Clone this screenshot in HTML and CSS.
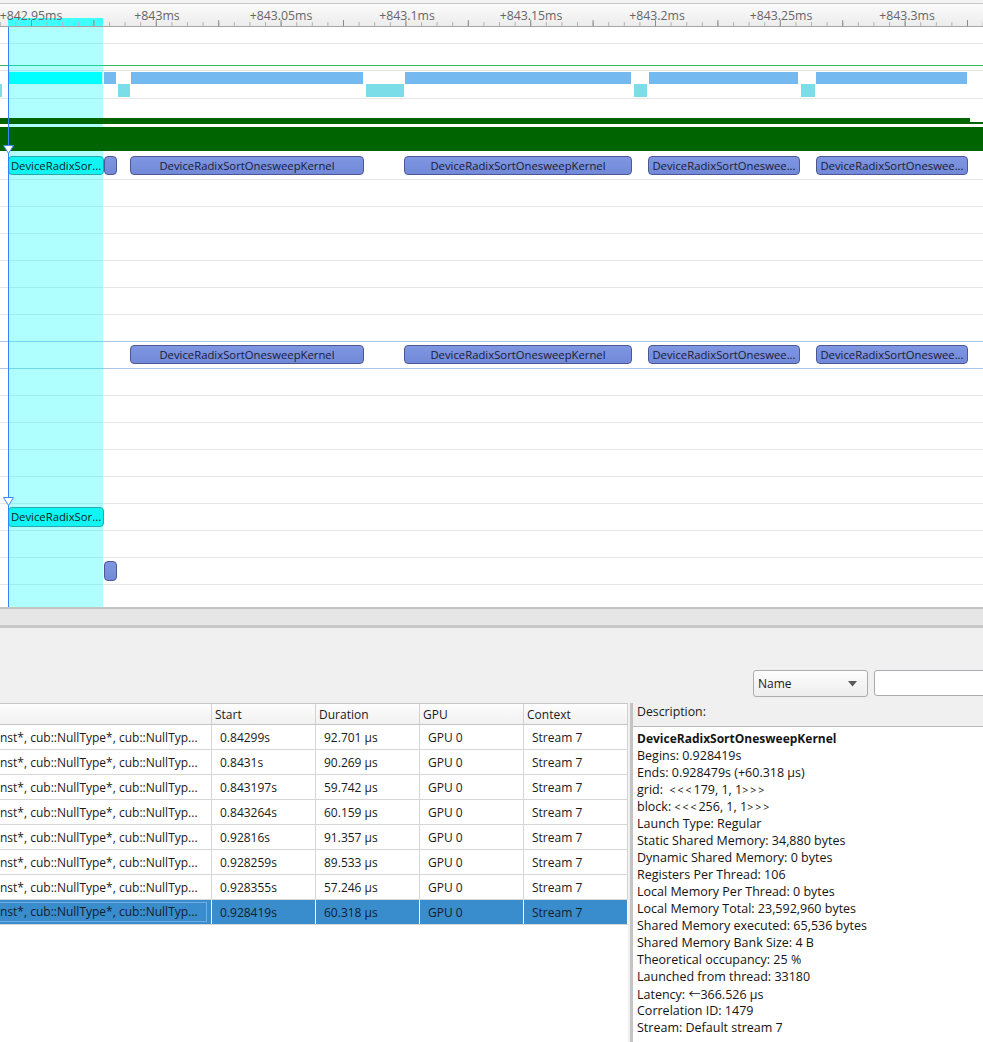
FILE: index.html
```html
<!DOCTYPE html>
<html>
<head>
<meta charset="utf-8">
<link rel="stylesheet" href="styles.css">
</head>
<body>
<div class="app">
  <div class="timeline">
    <div class="ruler-wrap">
      <div class="ruler">
        <svg class="ruler-svg" width="983" height="22" viewBox="0 0 983 22">
          <defs>
            <pattern id="minor" x="-0.2" y="0" width="15.6" height="22" patternUnits="userSpaceOnUse">
              <rect x="0" y="18" width="1" height="4" fill="#b4b4b4"/>
            </pattern>
            <pattern id="major" x="31" y="0" width="62.4" height="22" patternUnits="userSpaceOnUse">
              <rect x="0" y="16" width="1" height="6" fill="#8c8c8c"/>
            </pattern>
          </defs>
          <rect x="8" y="14" width="95" height="8" fill="#40ffff"/>
          <rect width="983" height="22" fill="url(#minor)"/>
          <rect width="983" height="22" fill="url(#major)"/>
          <g class="ruler-labels">
            <text x="31" y="15.5">+842.95ms</text>
            <text x="157" y="15.5">+843ms</text>
            <text x="281" y="15.5">+843.05ms</text>
            <text x="407" y="15.5">+843.1ms</text>
            <text x="531" y="15.5">+843.15ms</text>
            <text x="657" y="15.5">+843.2ms</text>
            <text x="781" y="15.5">+843.25ms</text>
            <text x="907" y="15.5">+843.3ms</text>
          </g>
        </svg>
      </div>
    </div>

    <div class="tracks">
      <div class="sel"></div>

      <div class="row r0"></div>
      <div class="row r1"></div>
      <div class="row r2"></div>
      <div class="row r3">
        <div class="tb cyan" style="left:9px;width:93px"></div>
        <div class="tb" style="left:104px;width:12px"></div>
        <div class="tb" style="left:131px;width:232px"></div>
        <div class="tb" style="left:405px;width:226px"></div>
        <div class="tb" style="left:649px;width:149px"></div>
        <div class="tb" style="left:816px;width:151px"></div>
        <div class="mb" style="left:0px;width:2px"></div>
        <div class="mb" style="left:118px;width:12px"></div>
        <div class="mb" style="left:366px;width:38px"></div>
        <div class="mb" style="left:634px;width:13px"></div>
        <div class="mb" style="left:801px;width:14px"></div>
      </div>
      <div class="row r4">
        <div class="gb gb1"></div>
        <div class="gb gb1b"></div>
        <div class="gb gb2"></div>
      </div>
      <div class="row r5">
        <div class="kb kb-sel" style="left:8px;width:96px">DeviceRadixSor...</div>
        <div class="kb" style="left:104px;width:13px"></div>
        <div class="kb" style="left:130px;width:234px">DeviceRadixSortOnesweepKernel</div>
        <div class="kb" style="left:404px;width:228px">DeviceRadixSortOnesweepKernel</div>
        <div class="kb" style="left:648px;width:152px">DeviceRadixSortOneswee...</div>
        <div class="kb" style="left:816px;width:152px">DeviceRadixSortOneswee...</div>
      </div>
      <div class="row"></div>
      <div class="row"></div>
      <div class="row"></div>
      <div class="row"></div>
      <div class="row"></div>
      <div class="row r-hl"></div>
      <div class="row r-hl r-k2">
        <div class="kb" style="left:130px;width:234px">DeviceRadixSortOnesweepKernel</div>
        <div class="kb" style="left:404px;width:228px">DeviceRadixSortOnesweepKernel</div>
        <div class="kb" style="left:648px;width:152px">DeviceRadixSortOneswee...</div>
        <div class="kb" style="left:816px;width:152px">DeviceRadixSortOneswee...</div>
      </div>
      <div class="row"></div>
      <div class="row"></div>
      <div class="row"></div>
      <div class="row"></div>
      <div class="row"></div>
      <div class="row r-k3">
        <div class="kb kb-sel" style="left:8px;width:96px">DeviceRadixSor...</div>
      </div>
      <div class="row"></div>
      <div class="row r-k3">
        <div class="kb" style="left:104px;width:13px"></div>
      </div>
      <div class="row r-last"></div>

      <div class="sel-line"></div>
      <svg class="marker m1" width="11" height="9" viewBox="0 0 11 9"><path d="M0.5 0.5 H10.5 L5.5 8.5 Z" fill="#ffffff" stroke="#3d8bff" stroke-width="1"/></svg>
      <svg class="marker m2" width="11" height="9" viewBox="0 0 11 9"><path d="M0.5 0.5 H10.5 L5.5 8.5 Z" fill="#ffffff" stroke="#3d8bff" stroke-width="1"/></svg>
    </div>
  </div>
  <div class="split"></div>

  <div class="panel">
    <div class="toolbar">
      <div class="dropdown">
        <span>Name</span>
        <svg class="dd-arrow" width="9" height="6" viewBox="0 0 9 6"><path d="M0 0 H9 L4.5 5.5 Z" fill="#5a5a5a"/></svg>
      </div>
      <div class="search"></div>
    </div>
    <div class="content">
      <div class="table">
        <div class="tr th">
          <div class="c c1"></div>
          <div class="c">Start</div>
          <div class="c">Duration</div>
          <div class="c">GPU</div>
          <div class="c">Context</div>
        </div>
        <div class="tr">
          <div class="c c1">nst*, cub::NullType*, cub::NullTyp...</div>
          <div class="c">0.84299s</div><div class="c">92.701 μs</div><div class="c">GPU 0</div><div class="c">Stream 7</div>
        </div>
        <div class="tr">
          <div class="c c1">nst*, cub::NullType*, cub::NullTyp...</div>
          <div class="c">0.8431s</div><div class="c">90.269 μs</div><div class="c">GPU 0</div><div class="c">Stream 7</div>
        </div>
        <div class="tr">
          <div class="c c1">nst*, cub::NullType*, cub::NullTyp...</div>
          <div class="c">0.843197s</div><div class="c">59.742 μs</div><div class="c">GPU 0</div><div class="c">Stream 7</div>
        </div>
        <div class="tr">
          <div class="c c1">nst*, cub::NullType*, cub::NullTyp...</div>
          <div class="c">0.843264s</div><div class="c">60.159 μs</div><div class="c">GPU 0</div><div class="c">Stream 7</div>
        </div>
        <div class="tr">
          <div class="c c1">nst*, cub::NullType*, cub::NullTyp...</div>
          <div class="c">0.92816s</div><div class="c">91.357 μs</div><div class="c">GPU 0</div><div class="c">Stream 7</div>
        </div>
        <div class="tr">
          <div class="c c1">nst*, cub::NullType*, cub::NullTyp...</div>
          <div class="c">0.928259s</div><div class="c">89.533 μs</div><div class="c">GPU 0</div><div class="c">Stream 7</div>
        </div>
        <div class="tr">
          <div class="c c1">nst*, cub::NullType*, cub::NullTyp...</div>
          <div class="c">0.928355s</div><div class="c">57.246 μs</div><div class="c">GPU 0</div><div class="c">Stream 7</div>
        </div>
        <div class="tr selected">
          <div class="c c1"><span class="focus">nst*, cub::NullType*, cub::NullTyp...</span></div>
          <div class="c">0.928419s</div><div class="c">60.318 μs</div><div class="c">GPU 0</div><div class="c">Stream 7</div>
        </div>
      </div>
      <div class="desc">
        <div class="desc-head">Description:</div>
        <div class="desc-body">
          <div class="line b">DeviceRadixSortOnesweepKernel</div>
          <div class="line">Begins: 0.928419s</div>
          <div class="line">Ends: 0.928479s (+60.318 μs)</div>
          <div class="line">grid:&nbsp; <span class="ang">&lt;&lt;&lt;</span>179, 1, 1<span class="ang">&gt;&gt;&gt;</span></div>
          <div class="line">block: <span class="ang">&lt;&lt;&lt;</span>256, 1, 1<span class="ang">&gt;&gt;&gt;</span></div>
          <div class="line">Launch Type: Regular</div>
          <div class="line">Static Shared Memory: 34,880 bytes</div>
          <div class="line">Dynamic Shared Memory: 0 bytes</div>
          <div class="line">Registers Per Thread: 106</div>
          <div class="line">Local Memory Per Thread: 0 bytes</div>
          <div class="line">Local Memory Total: 23,592,960 bytes</div>
          <div class="line">Shared Memory executed: 65,536 bytes</div>
          <div class="line">Shared Memory Bank Size: 4 B</div>
          <div class="line">Theoretical occupancy: 25 %</div>
          <div class="line">Launched from thread: 33180</div>
          <div class="line">Latency: <span class="arrow">←</span>366.526 μs</div>
          <div class="line">Correlation ID: 1479</div>
          <div class="line">Stream: Default stream 7</div>
        </div>
      </div>
    </div>
  </div>
</div>
</body>
</html>
```

FILE: styles.css
```css
* { box-sizing: border-box; }
html, body { margin: 0; padding: 0; }
body {
  width: 983px;
  height: 1042px;
  overflow: hidden;
  background: #ffffff;
  font-family: "Open Sans", "Noto Sans", sans-serif;
  color: #1a1a1a;
}
.app { width: 983px; height: 1042px; display: flex; flex-direction: column; }

/* ---------- timeline ---------- */
.timeline {
  height: 609px;
  border-bottom: 2px solid #c4c4c4;
  background: #ffffff;
  display: flex;
  flex-direction: column;
}
.ruler-wrap { padding-top: 3px; background: #f3f3f3; }
.ruler {
  height: 24px;
  border-top: 1px solid #c6c6c6;
  border-bottom: 1px solid #a6a6a6;
  background: linear-gradient(#fbfbfb, #ececec);
}
.ruler-svg { display: block; }
.ruler-labels text {
  font-family: "Open Sans", "Noto Sans", sans-serif;
  font-size: 12.3px;
  fill: #666666;
  text-anchor: middle;
}

.tracks { position: relative; height: 580px; overflow: hidden; }
.sel {
  position: absolute; left: 8px; top: 0; width: 95px; bottom: 0;
  background: rgba(0, 255, 255, 0.31);
  z-index: 1;
}
.sel-line {
  position: absolute; left: 8px; top: 0; width: 1px; bottom: 0;
  background: #2e86ff;
  z-index: 3;
}
.marker { position: absolute; left: 3px; z-index: 4; display: block; }
.m1 { top: 118px; }
.m2 { top: 470px; }

.row {
  position: relative;
  height: 27px;
  border-bottom: 1px solid #e6e6e6;
}
.r0 { height: 17px; }
.r1 { height: 22px; border-bottom-color: #35b868; }
.r2 { height: 5px; }
.r3 { height: 28px; }
.r4 { height: 53px; border-bottom: none; }
.r5 { height: 28px; }
.r-hl { border-bottom-color: #a9c6e6; }
.r-last { height: 22px; border-bottom: none; }

.tb { position: absolute; top: 1px; height: 12px; background: #74baf0; z-index: 2; }
.tb.cyan { background: #00ffff; }
.mb { position: absolute; top: 13px; height: 13px; background: #7adde7; z-index: 2; }

.gb { position: absolute; background: #006400; z-index: 2; }
.gb1 { left: 0; width: 970px; top: 19px; height: 6px; }
.gb1b { left: 970px; right: 0; top: 23px; height: 2px; }
.gb2 { left: 0; right: 0; top: 28px; height: 24px; }

.kb {
  position: absolute;
  top: 4px;
  height: 19px;
  background: linear-gradient(#7f97e2, #7189d8);
  border: 1px solid #4b5895;
  border-radius: 4px;
  font-family: "Open Sans", "Noto Sans", sans-serif;
  font-size: 11.3px;
  line-height: 17px;
  color: #1a1a36;
  text-align: center;
  white-space: nowrap;
  overflow: hidden;
  z-index: 2;
}
.r-k2 .kb { top: 3px; }
.r-k3 .kb { top: 3px; height: 20px; line-height: 18px; }
.kb-sel {
  background: #12f4f4;
  border-color: #27a9b2;
  color: #0d2424;
}

.split {
  height: 19px;
  background: #e6e6e6;
  border-bottom: 3px solid #c8c8c8;
}

/* ---------- bottom panel ---------- */
.panel {
  flex: 1;
  background: #f0f0f0;
  display: flex;
  flex-direction: column;
  font-size: 12px;
}
.toolbar {
  height: 75px;
  display: flex;
  align-items: flex-end;
  gap: 6px;
  padding: 0 0 6px 753px;
  overflow: hidden;
}
.dropdown {
  width: 115px;
  height: 27px;
  flex: none;
  border: 1px solid #acacac;
  border-radius: 3px;
  background: linear-gradient(#fdfdfd, #ededed);
  display: flex;
  align-items: center;
  justify-content: space-between;
  padding: 0 10px 0 4px;
  color: #1a1a1a;
}
.dd-arrow { display: block; }
.search {
  width: 130px;
  height: 26px;
  flex: none;
  background: #ffffff;
  border: 1px solid #a9abb0;
  border-radius: 3px;
  margin-bottom: 1px;
}

.content { flex: 1; display: flex; min-height: 0; }
.table {
  width: 628px;
  flex: none;
  background: #ffffff;
  border-top: 1px solid #c6c6c6;
}
.tr {
  display: grid;
  grid-template-columns: 212px 104px 104px 104px 104px;
  height: 25px;
  border-bottom: 1px solid #d6d6d6;
}
.c {
  border-right: 1px solid #d6d6d6;
  padding-left: 8px;
  line-height: 25px;
  white-space: nowrap;
  overflow: hidden;
  color: #1a1a1a;
}
.c1 { padding-left: 0; }
.th { height: 21px; background: linear-gradient(#fdfdfd, #f1f1f1); border-bottom-color: #c6c6c6; }
.th .c { line-height: 21px; padding-left: 3px; border-right-color: #d2d2d2; }
.tr.selected { background: #3a8dcc; }
.tr.selected .c { color: #10202e; border-right-color: #ffffff; }
.focus {
  display: block;
  margin: 2px 4px 2px 0;
  line-height: 18px;
  border: 1px solid #6eaee0;
  border-left: none;
}

.desc {
  flex: 1;
  display: flex;
  flex-direction: column;
  border-left: 3px solid #c4c4c4;
  margin-left: 2px;
}
.desc-head {
  height: 24px;
  line-height: 18px;
  padding-left: 4px;
  background: #f0f0f0;
  border-bottom: 1px solid #b9b9b9;
  color: #1a1a1a;
  font-size: 12.3px;
}
.desc-body {
  flex: 1;
  background: #ffffff;
  padding: 3px 0 0 4px;
  font-size: 12.5px;
}
.line { height: 17px; line-height: 17px; white-space: nowrap; color: #141414; }
.line.b { font-weight: 700; font-size: 12px; }
.ang { font-size: 10.5px; letter-spacing: 2px; }
.arrow { font-family: "Noto Sans CJK SC", "DejaVu Sans", sans-serif; font-size: 12px; }
```
